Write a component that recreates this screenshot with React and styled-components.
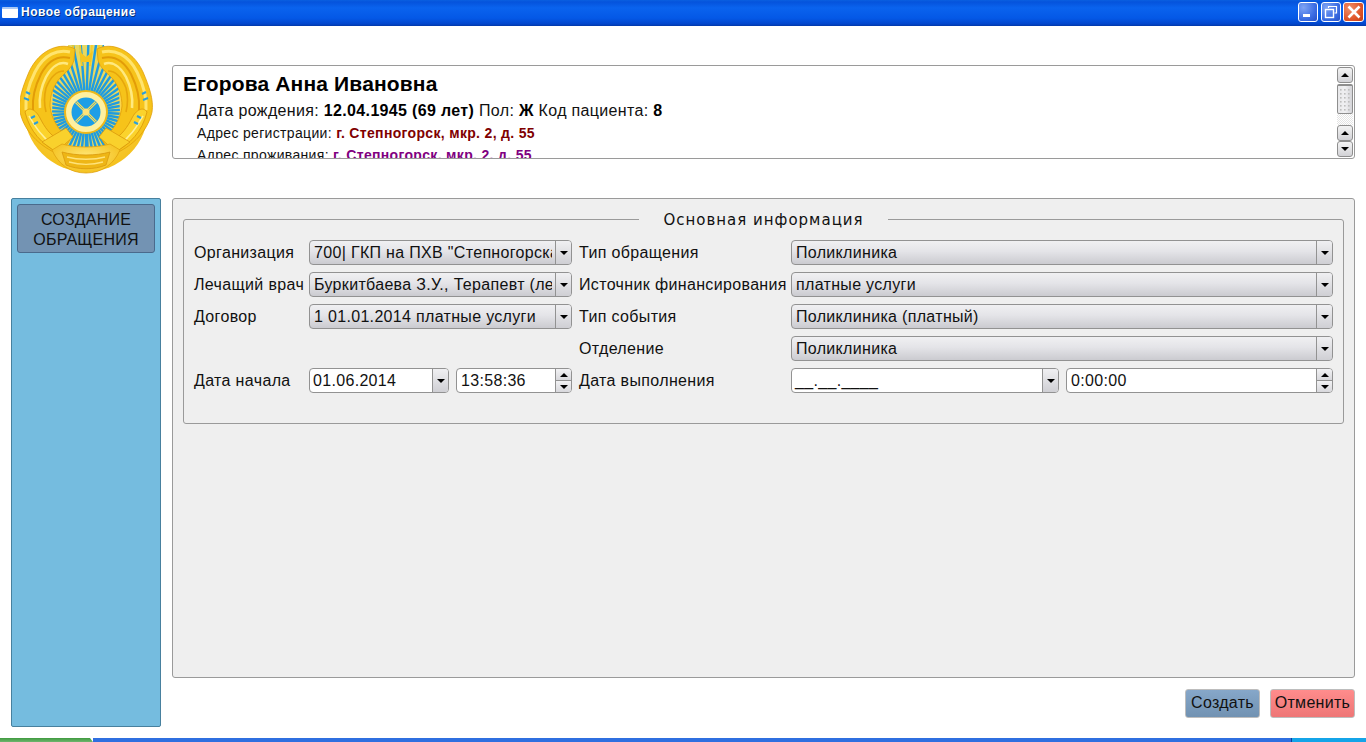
import React from 'react';
import styled, { createGlobalStyle } from 'styled-components';

const Global = createGlobalStyle`
  html, body { margin: 0; padding: 0; background: #fff; overflow: hidden; }
  * { box-sizing: border-box; }
  body { font-family: "Liberation Sans", Arial, sans-serif; color: #111; }
`;

const Screen = styled.div`
  width: 1366px; height: 742px; display: flex; flex-direction: column; background: #fff; overflow: hidden;
`;
const TitleBar = styled.div`
  height: 26px; flex: none; display: flex; align-items: center; padding: 0 2px 2px 2px;
  background: linear-gradient(180deg, #0a5fe0 0%, #0553dc 8%, #0a63ee 30%, #0458e6 70%, #0246cc 92%, #0238a8 100%);
`;
const TitleIcon = styled.div`
  width: 16px; height: 11px; margin-right: 3px; background: #fff; border-top: 2px solid #a9c8f5; border-radius: 1px;
`;
const TitleText = styled.div`
  flex: 1; color: #fff; font: bold 12px "Liberation Sans", sans-serif; letter-spacing: .5px; text-shadow: 1px 1px 0 #02307a;
`;
const WinBtn = styled.div`
  width: ${p => p.$close ? 21 : 20}px; height: 20px; margin-left: ${p => p.$close ? 2 : 3}px; border: 1px solid #fff; border-radius: 3px; display: flex; align-items: center; justify-content: center;
  background: ${p => p.$close ? 'radial-gradient(circle at 30% 30%, #f0906a, #e0562a 60%, #c23c14)' : 'radial-gradient(circle at 25% 25%, #7fa4f4, #3c6ee4 60%, #2450c8)'};
`;

const Header = styled.div`
  height: 172px; flex: none; display: flex; padding: 18px 11px 0 20px;
`;
const EmblemBox = styled.div`
  width: 133px; height: 130px; flex: none; margin-right: 19px; filter: blur(.35px);
`;
const PatientBox = styled.div`
  flex: 1; height: 94px; margin-top: 21px; border: 1px solid #9a9a9a; border-radius: 3px; display: flex; overflow: hidden; background: #fff;
`;
const PatientText = styled.div`
  flex: 1; padding: 5px 0 0 10px; overflow: hidden; height: 92px;
`;
const PatientName = styled.div`
  font-size: 21px; font-weight: bold; line-height: 26px; color: #000; letter-spacing: .15px; margin-bottom: 3px;
`;
const InfoLine = styled.div`
  margin-left: 14px; font-size: ${p => p.$small ? 14 : 16}px; letter-spacing: ${p => p.$small ? .33 : .34}px; line-height: 22px; color: #111; white-space: nowrap;
  b { color: ${p => p.$color || '#000'}; }
`;
const ScrollBar = styled.div`
  width: 16px; margin: 1px 1px 1px 0; flex: none; display: flex; flex-direction: column; align-items: stretch;
`;
const ScrollBtn = styled.div`
  height: 16px; border: 1px solid #8e8e8e; border-radius: 3px; display: flex; align-items: center; justify-content: center;
  background: linear-gradient(180deg, #f4f4f4, #d2d2d6);
`;
const ScrollThumb = styled.div`
  height: 30px; margin-top: 1px; border: 1px solid #8e8e8e; border-top-width: 2px; border-radius: 2px; display: flex; align-items: center; justify-content: center;
  background: linear-gradient(90deg, #e8e8ea, #f0f0f2 50%, #d4d4d8);
`;
const ScrollTrack = styled.div`
  flex: 1; background: repeating-conic-gradient(#e4e4e4 0 25%, #fff 0 50%) 0 0 / 2px 2px;
`;

const Workspace = styled.div`
  height: 529px; flex: none; display: flex; gap: 11px; padding: 0 11px;
`;
const Sidebar = styled.div`
  width: 150px; flex: none; padding: 5px; background: #75bcdf; border: 1px solid #47809e; border-radius: 2px;
`;
const SideButton = styled.div`
  height: 49px; border: 1px solid #4a6a8c; border-radius: 3px; background: #7393b3; color: #111;
  font-size: 16px; line-height: 20px; text-align: center; padding-top: 5px; letter-spacing: .2px;
`;
const MainCol = styled.div`
  flex: 1; display: flex; flex-direction: column;
`;
const Panel = styled.div`
  flex: 1; background: #efefef; border: 1px solid #9a9a9a; border-radius: 3px; padding: 10px 10px 0;
`;
const Group = styled.fieldset`
  margin: 0; padding: 11px 10px 30px; border: 1px solid #9a9a9a; border-radius: 3px; min-width: 0;
`;
const GroupTitle = styled.legend`
  margin: 0 auto; padding: 2px 24px 0; font: 15px/18px "DejaVu Sans", sans-serif; letter-spacing: 1px; color: #111;
`;
const FormGrid = styled.div`
  display: grid; grid-template-columns: 115px 263px 219px 1fr; column-gap: 0; row-gap: 7px; grid-auto-rows: 25px; align-items: center;
`;
const Label = styled.div`
  font-size: 16px; letter-spacing: .35px; color: #111; white-space: nowrap; margin-left: ${p => p.$second ? 7 : 0}px; line-height: 25px; height: 25px;
`;
const Empty = styled.div``;
const Control = styled.div`
  height: 25px; min-width: 0; display: flex; border: 1px solid #929292; border-radius: 4px; overflow: hidden;
  background: ${p => p.$white ? '#fff' : 'linear-gradient(180deg, #f0f0f2 0%, #e4e4e8 45%, #cbcbd0 100%)'};
  flex: ${p => p.$fill ? 1 : 'none'};
  width: ${p => p.$w ? `${p.$w}px` : 'auto'};
`;
const ControlClip = styled.div`
  flex: 1; min-width: 0; margin-right: 3px; overflow: hidden;
`;
const ControlText = styled.div`
  font-size: 16px; letter-spacing: .32px; line-height: 23px; padding-left: ${p => p.$pad ?? 4}px; color: #111; white-space: nowrap;
`;
const DropBtn = styled.div`
  width: 16px; flex: none; border-left: 1px solid #929292; display: flex; align-items: center; justify-content: center;
  background: linear-gradient(180deg, #f0f0f2, #cfcfd4);
`;
const SpinBtns = styled.div`
  width: 16px; flex: none; border-left: 1px solid #929292; display: flex; flex-direction: column;
`;
const SpinPart = styled.div`
  flex: 1; display: flex; align-items: center; justify-content: center;
  background: linear-gradient(180deg, #f2f2f4, #d8d8dc);
  & + & { border-top: 1px solid #929292; }
`;
const Pair = styled.div`
  display: flex; gap: 7px; min-width: 0;
`;
const Footer = styled.div`
  height: 49px; flex: none; display: flex; justify-content: flex-end; gap: 10px; padding-top: 11px; padding-bottom: 9px;
`;
const ActionBtn = styled.div`
  width: ${p => p.$w}px; height: 29px; border: 1px solid #bdbdbd; border-radius: 3px; text-align: center; font-size: 16px; letter-spacing: .3px; line-height: 26px; color: #111;
  background: ${p => p.$danger ? 'linear-gradient(180deg, #ff8c8c, #ee7676)' : 'linear-gradient(180deg, #86a7c9, #7192b2)'};
`;
const Taskbar = styled.div`
  flex: 1; margin-top: 11px; display: flex;
`;
const StartPart = styled.div`
  width: 93px; background: linear-gradient(180deg, #3f9a3f, #6fb56f); clip-path: polygon(0 0, 90px 0, 93px 100%, 0 100%);
`;
const TaskMid = styled.div`
  flex: 1; background: #2f6fe0;
`;
const Tray = styled.div`
  width: 75px; background: #14a4e8; border-left: 1px solid #0c3f9a;
`;

const Tri = ({ up, w = 8, h = 4 }) => (
  <svg width={w} height={h} viewBox="0 0 8 4"><path d={up ? 'M0 4L4 0L8 4Z' : 'M0 0H8L4 4Z'} fill="#000" /></svg>
);

const WING_OUTER = 'M55 5C42 -2 20 4 9 28C3 42 -2 56 0 68C4 86 18 102 40 111L50 96C38 86 31 74 30 62C30 52 33 42 40 34C46 28 52 24 54 16Z';

function Wing({ flip }) {
  return (
    <g transform={flip ? 'translate(132 0) scale(-1 1)' : undefined}>
      <path d={WING_OUTER} fill="#f6c31a" stroke="#e09e0a" strokeWidth=".8" />
      <path d="M50 8C38 5 24 10 15 28C9 40 5 54 6 66" fill="none" stroke="#ffe46e" strokeWidth="3" />
      <path d="M50 14C38 11 28 17 21 30C15 42 12 54 13 66" fill="none" stroke="#e29c08" strokeWidth="2" />
      <path d="M48 20C40 17 32 22 26 33C21 43 19 54 20 64" fill="none" stroke="#ffe97f" strokeWidth="2.6" />
      <path d="M44 27C36 27 30 34 26 44C24 52 24 60 26 68" fill="none" stroke="#e6a60c" strokeWidth="1.6" />
      <path d="M5 68C9 62 16 66 20 74C24 82 30 92 42 98L37 108C22 100 10 88 5 68Z" fill="#fbd32c" stroke="#d9960a" strokeWidth=".8" />
      <path d="M9 72C14 80 20 92 34 102" fill="none" stroke="#fff09a" strokeWidth="1.6" />
      <path d="M6 48L10 50M4 54L9 56M11 74L15 72M14 80L18 78" stroke="#2a9fdc" strokeWidth="2" />
    </g>
  );
}

function Emblem() {
  const cx = 66, cy = 68;
  const rays = [];
  for (let a = -180; a < 180; a += 6.5) {
    const r = a * Math.PI / 180;
    rays.push(<line key={a} x1={cx + 20 * Math.sin(r)} y1={cy - 20 * Math.cos(r)} x2={cx + 90 * Math.sin(r)} y2={cy - 90 * Math.cos(r)} stroke="#1f9ce0" strokeWidth="2.4" />);
  }
  return (
    <svg width="133" height="130" viewBox="0 0 133 130">
      <defs>
        <radialGradient id="gold" cx="50%" cy="40%" r="65%">
          <stop offset="0%" stopColor="#ffe675" />
          <stop offset="100%" stopColor="#f3bd14" />
        </radialGradient>
        <clipPath id="fan">
          <path d="M48 1H84L86 18L98 26L100 68L92 104H40L32 68L34 26L46 18Z" />
        </clipPath>
      </defs>
      <circle cx="66" cy="66" r="62" fill="url(#gold)" />
      <path d="M48 1H84L86 18L98 26L100 68L92 104H40L32 68L34 26L46 18Z" fill="#e8d860" />
      <g clipPath="url(#fan)">{rays}</g>
      <path d="M53 1V18M60 1L62 22M72 1L70 22M79 1V18" stroke="#f7cc2a" strokeWidth="1.8" />
      <path d="M59 7L66 13L73 7L71 18H61Z" fill="#f6c51e" />
      <Wing />
      <Wing flip />
      <path d="M22 98L46 84L53 93L36 108Z" fill="#f9d12c" stroke="#d9980c" strokeWidth=".8" />
      <path d="M110 98L86 84L79 93L96 108Z" fill="#f9d12c" stroke="#d9980c" strokeWidth=".8" />
      <path d="M32 106L42 100C56 104 76 104 90 100L100 106C94 120 82 129 66 129C50 129 38 120 32 106Z" fill="url(#gold)" stroke="#e0a210" strokeWidth=".8" />
      <path d="M42 108C56 112 76 112 90 108L86 121C74 126 58 126 46 121Z" fill="#eeb616" stroke="#d9980c" strokeWidth=".8" />
      <path d="M47 113C58 116 74 116 85 113M49 118C60 121 72 121 83 118" fill="none" stroke="#ffe37a" strokeWidth="1.3" />
      <circle cx={cx} cy={cy} r="21" fill="#fff0a0" stroke="#edb81a" strokeWidth="2" />
      <circle cx={cx} cy={cy} r="14.5" fill="#1d9ee6" />
      <path d="M56 58L76 78M76 58L56 78" stroke="#ffdc52" strokeWidth="2.8" />
      <path d="M56 58L76 78M76 58L56 78" stroke="#1d9ee6" strokeWidth=".7" />
      <circle cx={cx} cy={cy} r="3.5" fill="#ffe27a" />
    </svg>
  );
}

const Combo = ({ children }) => (
  <Control>
    <ControlClip><ControlText>{children}</ControlText></ControlClip>
    <DropBtn><Tri /></DropBtn>
  </Control>
);
const DateEdit = ({ value, w, fill }) => (
  <Control $white $w={w} $fill={fill}>
    <ControlClip><ControlText $pad={3}>{value}</ControlText></ControlClip>
    <DropBtn><Tri /></DropBtn>
  </Control>
);
const TimeEdit = ({ value, w, fill }) => (
  <Control $white $w={w} $fill={fill}>
    <ControlClip><ControlText $pad={4}>{value}</ControlText></ControlClip>
    <SpinBtns>
      <SpinPart><Tri up /></SpinPart>
      <SpinPart><Tri /></SpinPart>
    </SpinBtns>
  </Control>
);

export default function App() {
  return (
    <Screen>
      <Global />
      <TitleBar>
        <TitleIcon />
        <TitleText>Новое обращение</TitleText>
        <WinBtn>
          <svg width="12" height="12" viewBox="0 0 12 12"><rect x="1" y="8" width="7" height="3" fill="#fff" /></svg>
        </WinBtn>
        <WinBtn>
          <svg width="14" height="14" viewBox="0 0 14 14" fill="none" stroke="#fff"><path d="M4.5 3V1.5H12.5V8H10.5" strokeWidth="1.2" /><rect x="1.5" y="4.5" width="8" height="8" strokeWidth="1.4" /></svg>
        </WinBtn>
        <WinBtn $close>
          <svg width="16" height="16" viewBox="0 0 16 16"><path d="M2.5 2.5L13.5 13.5M13.5 2.5L2.5 13.5" stroke="#fff" strokeWidth="2.6" /></svg>
        </WinBtn>
      </TitleBar>
      <Header>
        <EmblemBox><Emblem /></EmblemBox>
        <PatientBox>
          <PatientText>
            <PatientName>Егорова Анна Ивановна</PatientName>
            <InfoLine>Дата рождения: <b>12.04.1945 (69 лет)</b> Пол: <b>Ж</b> Код пациента: <b>8</b></InfoLine>
            <InfoLine $small $color="#7f0000">Адрес регистрации: <b>г. Степногорск, мкр. 2, д. 55</b></InfoLine>
            <InfoLine $small $color="#800080">Адрес проживания: <b>г. Степногорск, мкр. 2, д. 55</b></InfoLine>
          </PatientText>
          <ScrollBar>
            <ScrollBtn><Tri up /></ScrollBtn>
            <ScrollThumb>
              <svg width="10" height="24" viewBox="0 0 10 24" fill="#bdbdbd">
                {[2, 6, 10, 14, 18, 22].flatMap(y => [1, 5, 9].map(x => <rect key={`${x}-${y}`} x={x - 1} y={y - 1} width="1.6" height="1.6" />))}
              </svg>
            </ScrollThumb>
            <ScrollTrack />
            <ScrollBtn><Tri up /></ScrollBtn>
            <ScrollBtn><Tri /></ScrollBtn>
          </ScrollBar>
        </PatientBox>
      </Header>
      <Workspace>
        <Sidebar>
          <SideButton>СОЗДАНИЕ<br />ОБРАЩЕНИЯ</SideButton>
        </Sidebar>
        <MainCol>
          <Panel>
            <Group>
              <GroupTitle>Основная информация</GroupTitle>
              <FormGrid>
                <Label>Организация</Label>
                <Combo>700| ГКП на ПХВ "Степногорская</Combo>
                <Label $second>Тип обращения</Label>
                <Combo>Поликлиника</Combo>

                <Label>Лечащий врач</Label>
                <Combo>Буркитбаева З.У., Терапевт (лечебный</Combo>
                <Label $second>Источник финансирования</Label>
                <Combo>платные услуги</Combo>

                <Label>Договор</Label>
                <Combo>1 01.01.2014 платные услуги</Combo>
                <Label $second>Тип события</Label>
                <Combo>Поликлиника (платный)</Combo>

                <Empty />
                <Empty />
                <Label $second>Отделение</Label>
                <Combo>Поликлиника</Combo>

                <Label>Дата начала</Label>
                <Pair>
                  <DateEdit value="01.06.2014" w={140} />
                  <TimeEdit value="13:58:36" fill />
                </Pair>
                <Label $second>Дата выполнения</Label>
                <Pair>
                  <DateEdit value="__.__.____" w={268} />
                  <TimeEdit value="0:00:00" fill />
                </Pair>
              </FormGrid>
            </Group>
          </Panel>
          <Footer>
            <ActionBtn $w={75}>Создать</ActionBtn>
            <ActionBtn $w={85} $danger>Отменить</ActionBtn>
          </Footer>
        </MainCol>
      </Workspace>
      <Taskbar>
        <StartPart />
        <TaskMid />
        <Tray />
      </Taskbar>
    </Screen>
  );
}
